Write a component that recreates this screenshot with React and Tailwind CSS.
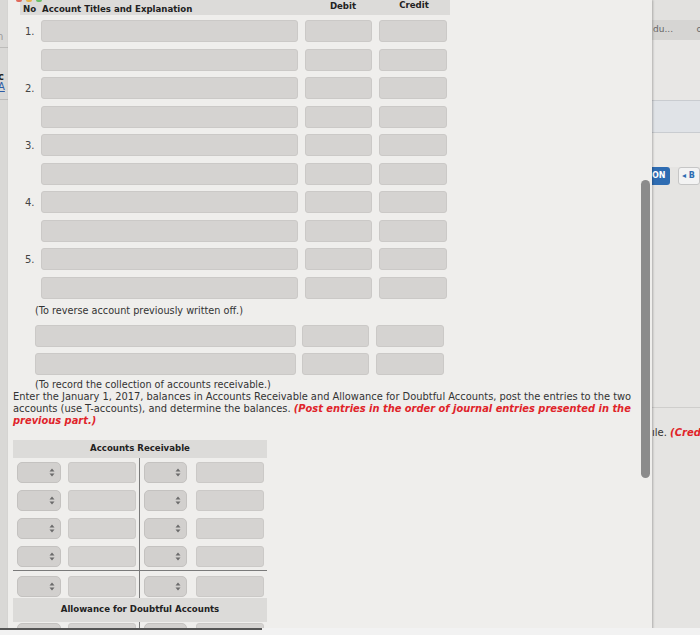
import React from 'react';

const font = { fontFamily: '"DejaVu Sans", Verdana, sans-serif' };

const Field = ({ className = '' }) => (
  <div className={`rounded-[3px] bg-[#d5d3d1] border border-[#cbc9c7] ${className}`} />
);

const Select = ({ className = '' }) => (
  <div className={`h-[21px] rounded-[5px] bg-[#d2d0ce] border border-[#c4c2c0] flex items-center justify-end pr-[5px] ${className}`}>
    <svg width="6" height="9" viewBox="0 0 6 9">
      <path d="M3 0.5 L5.5 3.5 H0.5 Z" fill="#6b6b6b" />
      <path d="M3 8.5 L5.5 5.5 H0.5 Z" fill="#6b6b6b" />
    </svg>
  </div>
);

const JournalRow = ({ no, first }) => (
  <div className={`flex items-center ${first ? '' : 'mt-[6.5px]'}`}>
    <div className="w-[21px] text-[10px] text-[#444] pl-[5px]">{no}</div>
    <Field className="h-[22px] w-[257px]" />
    <Field className="h-[22px] w-[67px] ml-[7px]" />
    <Field className="h-[22px] w-[68px] ml-[7px]" />
  </div>
);

// one line of a T-account: left and right halves split by the vertical rule
const TRow = ({ pad = 'pt-[7px]' }) => (
  <div className="flex">
    <div className={`w-[127px] flex items-start pl-[4px] border-r border-[#7a7a7a] ${pad}`}>
      <Select className="w-[44px]" />
      <Field className="h-[21px] w-[68px] ml-[7px]" />
    </div>
    <div className={`w-[127px] flex items-start pl-[4px] ${pad}`}>
      <Select className="w-[43px]" />
      <Field className="h-[21px] w-[68px] ml-[9px]" />
    </div>
  </div>
);

export default function App() {
  const journal = [1, '', 2, '', 3, '', 4, '', 5, ''];
  return (
    <div className="relative w-[700px] h-[635px] overflow-hidden flex bg-[#e5e4e2] text-[#333]" style={font}>
      {/* left background page */}
      <div className="w-[8px] bg-[#d9d8d6] flex flex-col text-[10px] leading-[10px] overflow-hidden">
        <div className="h-[48px] pt-[32px] text-[#999] -ml-[3px] border-b border-[#bdbcba]">n</div>
        <div className="pt-[24px] font-bold text-[#222] -ml-[2px]">c</div>
        <div className="text-[#2b5da8] underline -ml-[2px]">A</div>
        <div className="mt-[7px] border-b border-[#bdbcba]" />
      </div>

      {/* front window */}
      <div className="relative w-[644px] bg-[#efeeec] shadow-[1px_0_2px_rgba(0,0,0,0.25)]">
        <div className="flex gap-[4px] pl-[8px] h-0">
          <span className="w-[6px] h-[2px] rounded-b-full bg-[#e06a5c]" />
          <span className="w-[6px] h-[2px] rounded-b-full bg-[#e8b24a]" />
          <span className="w-[6px] h-[2px] rounded-b-full bg-[#6cc067]" />
        </div>

        {/* journal header */}
        <div className="ml-[12px] w-[430px] h-[15px] bg-[#dcdbd9] flex items-start text-[8.6px] font-bold text-[#222]">
          <div className="pl-[3px] pt-[3px] w-[284px]">No&nbsp; Account Titles and Explanation</div>
          <div className="w-[76px] text-center pl-[2px]">Debit</div>
          <div className="w-[64px] text-center -mt-[1px] pl-[4px]">Credit</div>
        </div>

        <div className="ml-[12px] mt-[5px]">
          {journal.map((n, i) => (
            <JournalRow key={i} no={n === '' ? '' : `${n}.`} first={i === 0} />
          ))}
        </div>

        <div className="ml-[27px] mt-[6px] text-[9.7px] leading-[12px] text-[#333]">
          (To reverse account previously written off.)
        </div>

        <div className="ml-[27px] mt-[8px]">
          <div className="flex">
            <Field className="h-[22px] w-[261px]" />
            <Field className="h-[22px] w-[67px] ml-[6px]" />
            <Field className="h-[22px] w-[68px] ml-[7px]" />
          </div>
          <div className="flex mt-[6px]">
            <Field className="h-[22px] w-[261px]" />
            <Field className="h-[22px] w-[67px] ml-[6px]" />
            <Field className="h-[22px] w-[68px] ml-[7px]" />
          </div>
        </div>

        <div className="ml-[27px] mt-[4px] text-[9.7px] leading-[12px] text-[#333]">
          (To record the collection of accounts receivable.)
        </div>

        <p className="ml-[5px] w-[628px] text-[9.9px] leading-[12px] text-[#333]">
          Enter the January 1, 2017, balances in Accounts Receivable and Allowance for Doubtful Accounts, post the entries to the two
          accounts (use T-accounts), and determine the balances.{' '}
          <span className="font-bold italic text-[#e0242a]">
            (Post entries in the order of journal entries presented in the previous part.)
          </span>
        </p>

        {/* T-account */}
        <div className="ml-[5px] mt-[13px] w-[254px]">
          <div className="h-[18px] bg-[#dcdbd9] flex items-center justify-center text-[8.6px] font-bold text-[#222]">
            Accounts Receivable
          </div>
          <TRow pad="pt-[4px]" />
          <TRow />
          <TRow />
          <TRow pad="pt-[7px] pb-[3px]" />
          <div className="border-t border-[#7a7a7a]">
            <TRow pad="pt-[5px] pb-[1px]" />
          </div>
          <div className="h-[24px] bg-[#dcdbd9] flex items-center justify-center text-[8.6px] font-bold text-[#222]">
            Allowance for Doubtful Accounts
          </div>
          <TRow pad="pt-[1px]" />
        </div>

        {/* scrollbar */}
        <div className="absolute left-[633px] top-[180px] w-[9px] h-[298px] rounded-full bg-[#8b8b8b]" />
      </div>

      {/* right background page */}
      <div className="flex-1 flex flex-col text-[9px] overflow-hidden">
        <div className="h-[20px] bg-[#e2e1df]" />
        <div className="h-[20px] bg-[#d6d5d3] flex items-center justify-between px-[1px] text-[#666]">
          <span>du...</span>
          <span className="-mr-[3px]">o</span>
        </div>
        <div className="h-[60px] bg-[#e8e7e5]" />
        <div className="h-[33px] bg-[#e0e3e7] border-y border-[#c9ccd0]" />
        <div className="h-[34px] bg-[#ebeae8]" />
        <div className="flex items-center gap-[8px]">
          <div className="h-[18px] w-[20px] bg-[#2e6cb2] rounded-r-[3px] text-white font-bold text-[8px] flex items-center">ON</div>
          <div className="h-[18px] w-[24px] bg-[#f3f3f3] border border-[#c6c6c6] rounded-[3px] text-[#2e6cb2] font-bold text-[8px] flex items-center pl-[3px]">◂ B</div>
        </div>
        <div className="mt-[222px] border-t border-[#cfcecc]" />
        <div className="mt-[17px] whitespace-nowrap text-[10px] text-[#333]">
          ıle. <span className="font-bold italic text-[#e0242a]">(Cred</span>
        </div>
      </div>

      {/* bottom bezel edge */}
      <div className="absolute left-0 bottom-0 w-full h-[7px] bg-[#f2f2f2]">
        <div className="w-[262px] h-[2px] bg-[#555]" />
      </div>
    </div>
  );
}
